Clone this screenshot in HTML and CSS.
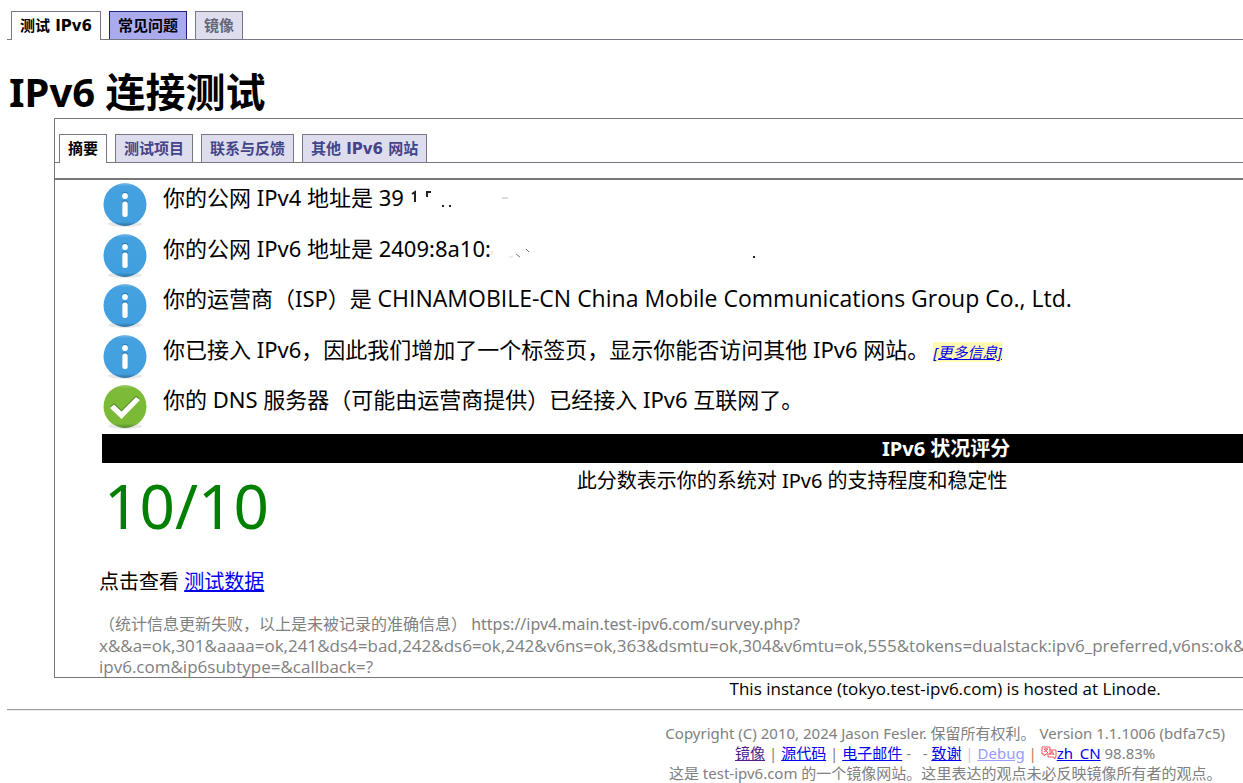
FILE: index.html
```html
<!DOCTYPE html>
<html lang="zh-CN">
<head>
<meta charset="utf-8">
<title>IPv6 连接测试</title>
<link rel="stylesheet" href="styles.css">
</head>
<body>
<svg class="defs" aria-hidden="true">
  <defs>
    <linearGradient id="blue" x1="0" y1="0" x2="0" y2="1"><stop offset="0" stop-color="#7cbbe8"/><stop offset=".08" stop-color="#45a1e0"/><stop offset=".9" stop-color="#429fdf"/><stop offset="1" stop-color="#2c6f9f"/></linearGradient>
    <linearGradient id="green" x1="0" y1="0" x2="0" y2="1"><stop offset="0" stop-color="#9fcd6a"/><stop offset=".08" stop-color="#7dbb39"/><stop offset=".9" stop-color="#7aba36"/><stop offset="1" stop-color="#55852a"/></linearGradient>
    <symbol id="info" viewBox="0 0 44 44">
      <ellipse cx="22" cy="41" rx="17" ry="3" fill="#e8e8e8"/>
      <circle cx="22" cy="21.500" r="21.500" fill="url(#blue)"/>
      <circle cx="22" cy="12" r="3.200" fill="#2f80b8"/><rect x="19" y="17" width="6" height="16" rx="2.500" fill="#2f80b8"/>
      <circle cx="22" cy="13" r="2.900" fill="#fff"/><rect x="19.300" y="18.500" width="5.400" height="15.500" rx="2.500" fill="#fff"/>
    </symbol>
    <symbol id="check" viewBox="0 0 44 44">
      <ellipse cx="22" cy="41" rx="17" ry="3" fill="#e8e8e8"/>
      <circle cx="22" cy="21.500" r="21.500" fill="url(#green)"/>
      <path d="M7 22 11 18 18.500 25 33 10.500 37 14 18.500 32.500Z" fill="#588c24"/>
      <path d="M7 23 11 19.500 18.500 26.500 33 12 37 15 18.500 34Z" fill="#fff"/>
    </symbol>
  </defs>
</svg>
<div class="page">
  <nav class="tabs">
    <a class="tab active" href="#">测试 IPv6</a>
    <a class="tab hover" href="#">常见问题</a>
    <a class="tab muted" href="#">镜像</a>
  </nav>
  <h1>IPv6 连接测试</h1>
  <main class="panel">
    <nav class="tabs inner">
      <a class="tab active" href="#">摘要</a>
      <a class="tab" href="#">测试项目</a>
      <a class="tab" href="#">联系与反馈</a>
      <a class="tab" href="#">其他 IPv6 网站</a>
    </nav>
    <section class="summary">
      <ul class="results">
        <li><svg class="icon"><use href="#info"/></svg><p>你的公网 IPv4 地址是 39<svg class="residue" viewBox="0 0 120 22"><path d="M8 6 11 4V14M23 9V4H27M38 18h2M45 18h2" fill="none" stroke="#222" stroke-width="2"/><path d="M98 10h6" stroke="#bbb"/></svg></p></li>
        <li><svg class="icon"><use href="#info"/></svg><p>你的公网 IPv6 地址是 2409:8a10:<svg class="residue wide" viewBox="0 0 300 22"><path d="M1 12v4" stroke="#fc9"/><path d="M25 15 29 18M35 10 38 13" stroke="#777"/><path d="M18 18h4" stroke="#cde"/><path d="M262 18h2" stroke="#222" stroke-width="2"/></svg></p></li>
        <li><svg class="icon"><use href="#info"/></svg><p>你的运营商（ISP）是 <span class="isp">CHINAMOBILE-CN China Mobile Communications Group Co., Ltd.</span></p></li>
        <li><svg class="icon"><use href="#info"/></svg><p>你已接入 IPv6，因此我们增加了一个标签页，显示你能否访问其他 IPv6 网站。<a class="more" href="#">[更多信息]</a></p></li>
        <li><svg class="icon"><use href="#check"/></svg><p>你的 DNS 服务器（可能由运营商提供）已经接入 IPv6 互联网了。</p></li>
      </ul>
      <table class="score">
        <thead><tr><th colspan="2">IPv6 状况评分</th></tr></thead>
        <tbody><tr><td class="points">10/10</td><td>此分数表示你的系统对 IPv6 的支持程度和稳定性</td></tr></tbody>
      </table>
      <p class="data">点击查看 <a href="#">测试数据</a></p>
      <p class="survey">（统计信息更新失败，以上是未被记录的准确信息） https://ipv4.main.test-ipv6.com/survey.php?<br><span class="query">x&amp;&amp;a=ok,301&amp;aaaa=ok,241&amp;ds4=bad,242&amp;ds6=ok,242&amp;v6ns=ok,363&amp;dsmtu=ok,304&amp;v6mtu=ok,555&amp;tokens=dualstack:ipv6_preferred,v6ns:ok&amp;<br>ipv6.com&amp;ip6subtype=&amp;callback=?</span></p>
    </section>
  </main>
  <p class="host">This instance (tokyo.test-ipv6.com) is hosted at Linode.</p>
  <hr>
  <footer>
    <p>Copyright (C) 2010, 2024 Jason Fesler. 保留所有权利。 Version 1.1.1006 (bdfa7c5)</p>
    <p><a class="visited" href="#">镜像</a> | <a href="#">源代码</a> | <a href="#">电子邮件</a> - &nbsp; - <a href="#">致谢</a> <span class="faint">| <a href="#">Debug</a></span> <span class="bar">|</span> <svg class="lang" viewBox="0 0 16 14"><path d="M1 1h8v7H5L3 10V8H1ZM8 4h7v7h-1v2l-2-2H7V8M3 3h4M5 2v1M3 6l4-3M3 3l4 4M9 9l2-4 2 4M10 8h3" fill="none" stroke="#f45b5b"/></svg><a href="#">zh_CN</a> 98.83%</p>
    <p>这是 test-ipv6.com 的一个镜像网站。这里表达的观点未必反映镜像所有者的观点。</p>
  </footer>
</div>
</body>
</html>
```
FILE: styles.css
```css
* { box-sizing: border-box; }
html { overflow: hidden; }
body { margin: 0; background: #fff; color: #000; font-family: "Noto Sans", "Noto Sans CJK SC", sans-serif; }
p, ul, h1 { margin: 0; padding: 0; }
a { color: #00e; }
.defs { position: absolute; width: 0; height: 0; }
/* The page is wider than the window and runs past its right edge. */
.page { width: 152vw; padding: 11px 6px 0 7px; }
.tabs { display: flex; gap: 8px; padding-left: 4px; border-bottom: 1px solid #778; font: bold 15px/20px "DejaVu Sans", "Noto Sans CJK SC", sans-serif; }
.tab { padding: 4px 8px 3px; border: 1px solid #778; border-bottom: 0; background: #dde; color: #448; text-decoration: none; white-space: nowrap; }
.tab.active { margin-bottom: -1px; padding-bottom: 4px; background: #fff; color: #000; }
.tab.hover { background: #aae; border-color: #227; color: #000; }
.tab.muted { color: #667; }
h1 { margin-top: 26px; padding-left: 2px; font-size: 40px; line-height: 52px; }
.panel { margin: 0 48px 0 47px; border: 1px solid #777; }
.inner { padding-top: 15px; }
.summary { margin-top: 15px; padding: 3px 47px 0 44px; border-top: 2px solid #777; }
.results { list-style: none; padding-left: 4px; }
.results li { display: flex; gap: 16px; height: 50px; }
.results li:nth-child(odd) { height: 51px; }
.results li:last-child { height: 49px; }
.results p { font-size: 22px; line-height: 28px; white-space: nowrap; }
.isp { font-family: "Open Sans", sans-serif; font-size: 23px; }
.icon { width: 44px; height: 44px; flex: none; }
.residue { width: 120px; height: 22px; vertical-align: -4px; }
.wide { width: 300px; }
.more { margin-left: 4px; background: #fffab0; font-size: 15px; font-style: italic; }
.score { width: 100%; border-collapse: collapse; font-size: 20px; line-height: 29px; margin-left: 3px; }
.score th { padding: 0; background: #000; color: #fff; }
.score td { padding: 3px 0 0 2px; vertical-align: top; }
.score .points { width: 28%; padding: 0 0 0 2px; color: green; font-size: 62px; line-height: 84px; }
.data { margin-top: 21px; font-size: 20px; line-height: 27px; }
.survey { margin-top: 19px; color: #808080; font-size: 16px; line-height: 21px; white-space: nowrap; }
.query { display: block; margin-top: -21px; font-family: "Open Sans", sans-serif; font-size: 17px; }
.survey br + .query { margin-top: 0; }
.host { font-family: "Open Sans", sans-serif; font-size: 17px; line-height: 22px; text-align: center; }
hr { margin: 9px 0 12px; border: 0; border-top: 1px solid #999; border-bottom: 1px solid #eee; }
footer { color: #808080; font-size: 15px; line-height: 20px; text-align: center; }
footer p { height: 20px; }
.visited { color: #551a8b; }
.faint { color: #ccc; }
.faint a { color: #99f; }
.bar { color: #b97b5b; }
.lang { width: 16px; height: 14px; vertical-align: -1px; }
```
